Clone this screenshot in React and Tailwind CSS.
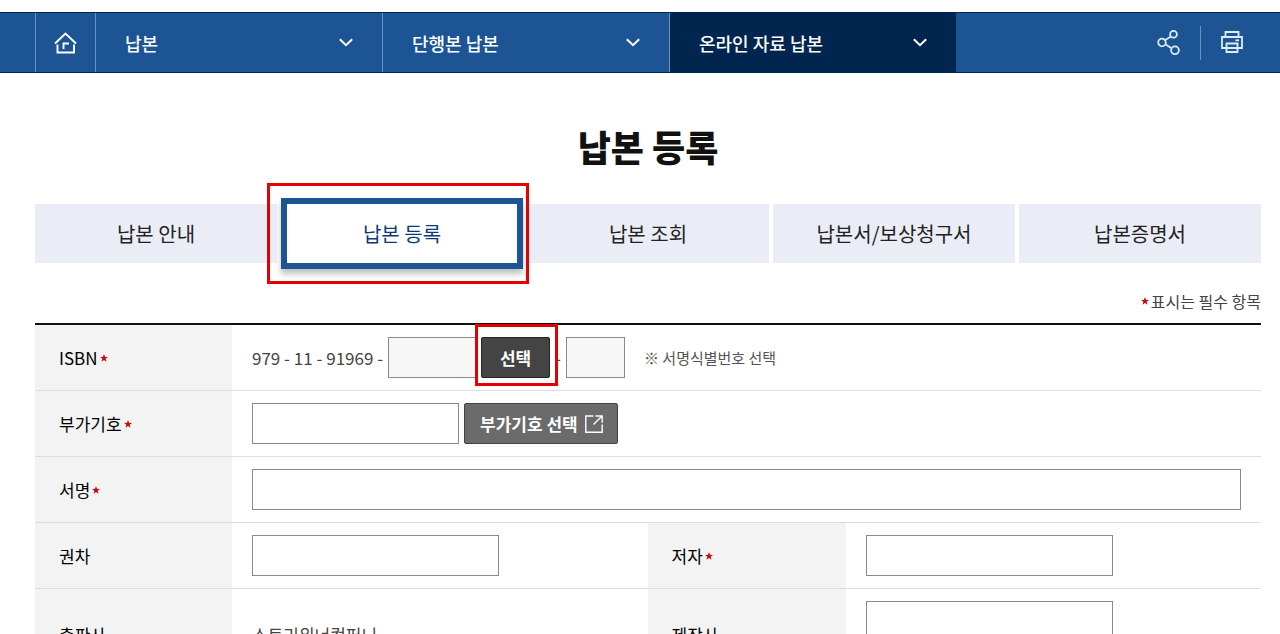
import React from "react";

const breadcrumbs = [
  { label: "납본", active: false },
  { label: "단행본 납본", active: false },
  { label: "온라인 자료 납본", active: true },
];

const tabs = ["납본 안내", "납본 등록", "납본 조회", "납본서/보상청구서", "납본증명서"];

function HomeIcon() {
  return (
    <svg width="24" height="24" viewBox="0 0 24 24" fill="none" stroke="currentColor" strokeWidth="1.9" aria-hidden="true">
      <path d="M1 12.500 11.500 2.500l10.500 10" />
      <path d="M3.500 13.500V21.500h16.500V13.500" />
      <path d="M9.500 18v-5.500h5.500" />
    </svg>
  );
}

function ChevronIcon() {
  return (
    <svg width="14" height="9" viewBox="0 0 14 9" fill="none" stroke="currentColor" strokeWidth="2" aria-hidden="true">
      <path d="M.8 1.200 7 7.200l6.200-6" />
    </svg>
  );
}

function ShareIcon() {
  return (
    <svg width="24" height="26" viewBox="0 0 24 26" fill="none" stroke="currentColor" strokeWidth="1.800" aria-hidden="true">
      <circle cx="5" cy="12.500" r="3.800" />
      <circle cx="16.500" cy="4.200" r="3.400" />
      <circle cx="18" cy="20.300" r="3.900" />
      <path d="M8 10l6-3.500M8.300 14.300l6.300 4" />
    </svg>
  );
}

function PrintIcon() {
  return (
    <svg width="22" height="24" viewBox="0 0 22 24" fill="none" stroke="currentColor" strokeWidth="1.800" aria-hidden="true">
      <path d="M4.500 6V1h13v5" />
      <path d="M5 17H1V6h20v11h-4" />
      <path d="M5.500 12.500h11V21h-11zM5.500 17h11" />
      <path d="M14.500 9.300h3.500" />
    </svg>
  );
}

function ExternalIcon() {
  return (
    <svg width="18" height="18" viewBox="0 0 18 18" fill="none" stroke="currentColor" strokeWidth="1.400" aria-hidden="true">
      <path d="M8.500 1H.8v16.200h16.400V9.500" />
      <path d="M8.500 9.500 17 1M10.500 1h6.700v6.700" />
    </svg>
  );
}

function Star() {
  return (
    <svg className="shrink-0 text-[#c00d0d]" width="8" height="8" viewBox="0 0 24 24" fill="currentColor" aria-hidden="true">
      <path d="M12 0l3 8.500 9 .2-7.100 5.500 2.500 8.800L12 17.800 4.600 23l2.500-8.800L0 8.700l9-.2z" />
    </svg>
  );
}

function HeadCell({ htmlFor, required, children }) {
  const content = (
    <>
      {children}
      {required && <Star />}
    </>
  );
  return (
    <th scope="row" className="bg-[#f3f3f3] pl-6 text-left font-normal text-black">
      {htmlFor ? (
        <label htmlFor={htmlFor} className="flex items-center gap-0.5">
          {content}
        </label>
      ) : (
        content
      )}
    </th>
  );
}

function TextBox({ className = "", ...props }) {
  return <input type="text" className={`block h-[41px] border border-[#8a8a8a] px-3 outline-none ${className}`} {...props} />;
}

export default function App() {
  return (
    <div className="h-screen overflow-hidden bg-white pt-3 font-['Noto_Sans_CJK_KR','Noto_Sans',sans-serif] text-[17px] leading-6 text-[#444]">
      <nav aria-label="현재 위치" className="flex h-[61px] border-y border-[#00254f] bg-[#1d5493] pl-[35px] text-white">
        <a href="#home" aria-label="홈" className="flex w-[60px] items-center justify-center border-l border-[#6d92bd]">
          <HomeIcon />
        </a>
        {breadcrumbs.map((item) => (
          <button
            key={item.label}
            type="button"
            className={`flex w-[287px] items-center justify-between border-l border-[#6d92bd] px-[29px] text-lg font-medium ${item.active ? "bg-[#00254f]" : ""}`}
          >
            {item.label}
            <ChevronIcon />
          </button>
        ))}
        <div className="ml-auto flex items-center pr-[37px] text-[#d9edfb]">
          <button type="button" aria-label="공유" className="pr-[19px]">
            <ShareIcon />
          </button>
          <span className="h-[34px] w-px bg-[#6d92bd]" />
          <button type="button" aria-label="인쇄" className="pl-5">
            <PrintIcon />
          </button>
        </div>
      </nav>

      <main className="pl-[35px] pr-[19px]">
        <h1 className="pt-12 text-center text-4xl leading-[50px] font-black text-[#111]">납본 등록</h1>

        <ul className="mt-[33px] grid grid-cols-5 gap-1 text-xl text-[#222]">
          {tabs.map((tab) =>
            tab === "납본 등록" ? (
              <li key={tab} className="relative -my-1.5">
                <a
                  href="#register"
                  aria-current="page"
                  className="flex h-[71px] items-center justify-center border-[6px] border-[#1d5493] bg-white text-[#0b3a75] shadow-[0_5px_6px_rgba(0,0,0,0.25)]"
                >
                  {tab}
                </a>
                <span className="pointer-events-none absolute -top-[15px] -right-[6px] -bottom-[15px] -left-[14px] z-10 border-3 border-[#e60000]" />
              </li>
            ) : (
              <li key={tab}>
                <a href="#tab" className="flex h-[59px] items-center justify-center bg-[#eaedf5]">
                  {tab}
                </a>
              </li>
            )
          )}
        </ul>

        <p className="mt-[26px] flex items-center justify-end gap-0.5 text-base">
          <Star />
          표시는 필수 항목
        </p>

        <table className="mt-[10px] w-full table-fixed border-collapse border-t-2 border-[#111]">
          <colgroup>
            <col className="w-[197px]" />
            <col />
            <col className="w-[198px]" />
            <col />
          </colgroup>
          <tbody>
            <tr className="border-b border-[#ddd]">
              <HeadCell htmlFor="isbn" required>ISBN</HeadCell>
              <td colSpan={3} className="px-5 py-3">
                <div className="flex items-center gap-[5px]">
                  <span>979 - 11 - 91969 -</span>
                  <TextBox id="isbn" readOnly className="w-[88px] bg-[#f7f7f7]" />
                  <div className="relative">
                    <button type="button" className="block h-[41px] w-[69px] rounded-xs border border-[#222] bg-[#444] font-bold text-white">
                      선택
                    </button>
                    <span className="pointer-events-none absolute -top-[13px] -right-[8px] -bottom-[8px] -left-[6px] z-10 border-3 border-[#e60000]" />
                  </div>
                  <span>-</span>
                  <TextBox aria-label="체크기호" readOnly className="w-[59px] bg-[#f7f7f7]" />
                  <span className="ml-[14px] text-[15px] text-[#555]">※ 서명식별번호 선택</span>
                </div>
              </td>
            </tr>
            <tr className="border-b border-[#ddd]">
              <HeadCell htmlFor="addition" required>부가기호</HeadCell>
              <td colSpan={3} className="px-5 py-3">
                <div className="flex items-center gap-[5px]">
                  <TextBox id="addition" className="w-[207px]" />
                  <button type="button" className="flex h-[41px] items-center gap-[7px] rounded-xs border border-[#444] bg-[#6b6b6b] pr-[14px] pl-[15px] font-bold text-white">
                    부가기호 선택
                    <ExternalIcon />
                  </button>
                </div>
              </td>
            </tr>
            <tr className="border-b border-[#ddd]">
              <HeadCell htmlFor="book-title" required>서명</HeadCell>
              <td colSpan={3} className="px-5 py-3">
                <TextBox id="book-title" className="w-full" />
              </td>
            </tr>
            <tr className="border-b border-[#ddd]">
              <HeadCell htmlFor="volume">권차</HeadCell>
              <td className="px-5 py-3">
                <TextBox id="volume" className="w-[247px]" />
              </td>
              <HeadCell htmlFor="author" required>저자</HeadCell>
              <td className="px-5 py-3">
                <TextBox id="author" className="w-[247px]" />
              </td>
            </tr>
            <tr className="h-[92px] border-b border-[#ddd]">
              <HeadCell>출판사</HeadCell>
              <td className="px-5 py-3">스토리위너컴퍼니</td>
              <HeadCell htmlFor="producer">제작사</HeadCell>
              <td className="px-5 py-3 align-top">
                <TextBox id="producer" className="w-[247px]" />
              </td>
            </tr>
          </tbody>
        </table>
      </main>
    </div>
  );
}
